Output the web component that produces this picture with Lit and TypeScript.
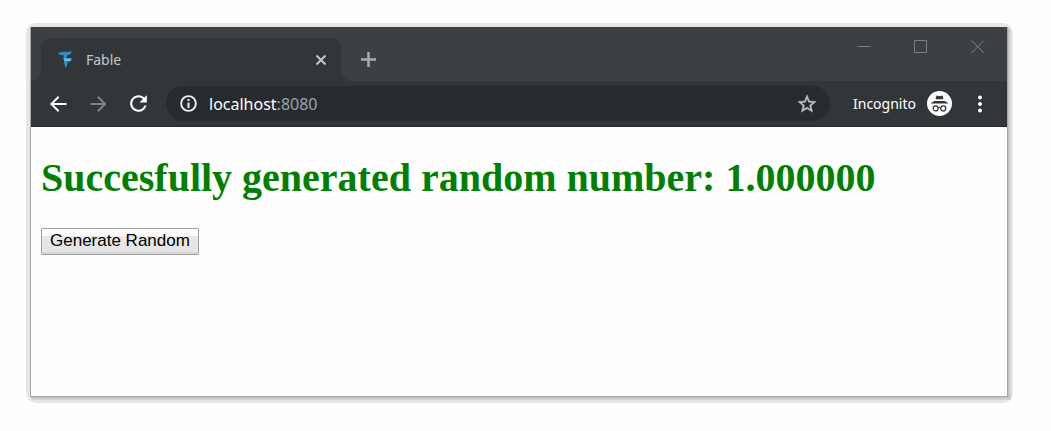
import { LitElement, html, css } from "lit";
import { customElement, property, state } from "lit/decorators.js";

@customElement("browser-tabs")
class BrowserTabs extends LitElement {
  @property() title = "";

  static styles = css`
    :host {
      display: flex;
      justify-content: space-between;
      height: 54px;
      background: #3c4043;
      font-family: "Noto Sans", sans-serif;
    }
    button {
      border: 0;
      padding: 0;
      background: none;
      color: inherit;
      display: flex;
      align-items: center;
      justify-content: center;
    }
    svg {
      display: block;
    }
    .strip {
      display: flex;
      align-items: flex-end;
      min-width: 0;
    }
    .flare {
      width: 10px;
      height: 10px;
      flex: none;
    }
    .flare.start {
      background: radial-gradient(circle at 0 0, #3c4043 9px, #323639 10px);
    }
    .flare.end {
      background: radial-gradient(circle at 100% 0, #3c4043 9px, #323639 10px);
    }
    .tab {
      display: flex;
      align-items: center;
      box-sizing: border-box;
      width: 300px;
      height: 43px;
      padding: 0 12px 0 14px;
      border-radius: 10px 10px 0 0;
      background: #323639;
      color: #c3c6c9;
    }
    .title {
      flex: 1;
      padding-left: 11px;
      font-size: 14px;
      line-height: 20px;
    }
    .add {
      width: 35px;
      height: 43px;
      color: #a9acae;
    }
    .controls {
      display: flex;
      height: 40px;
      padding-right: 1px;
      color: #7d8082;
    }
    .controls button {
      width: 57px;
    }
  `;

  render() {
    return html`
      <div class="strip">
        <span class="flare start"></span>
        <div class="tab">
          <svg width="20" height="20" viewBox="0 0 20 20" aria-hidden="true">
            <path fill="#2f8fc4" d="M3 3.500 C6 1 11 2 17 1.500 C16.500 4 14 5 12 5.300 L11.500 8 L16.500 8.500 L16 11 L12.500 12 C13 14 11.500 16 10.500 18.500 C10 15 8.500 13 9 10 C7.500 9 9 7 9 5.500 C7 5 5 5 3 3.500 Z" />
            <path fill="#67bde5" d="M9 8.500 L16.500 8.500 L15.500 11 L9.500 11 Z" />
          </svg>
          <span class="title">${this.title}</span>
          <button aria-label="Close tab">
            <svg width="16" height="16" viewBox="0 0 16 16" fill="none" stroke="currentColor" stroke-width="2">
              <path d="M3.500 3.500 L12.500 12.500 M12.500 3.500 L3.500 12.500" />
            </svg>
          </button>
        </div>
        <span class="flare end"></span>
        <button class="add" aria-label="New tab">
          <svg width="15" height="15" viewBox="0 0 15 15" fill="none" stroke="currentColor" stroke-width="2.500">
            <path d="M7.500 0 V15 M0 7.500 H15" />
          </svg>
        </button>
      </div>
      <div class="controls">
        <button aria-label="Minimize">
          <svg width="14" height="14" viewBox="0 0 14 14" fill="none" stroke="currentColor"><path d="M0.500 6.500 H13.500" /></svg>
        </button>
        <button aria-label="Maximize">
          <svg width="14" height="14" viewBox="0 0 14 14" fill="none" stroke="currentColor"><path d="M0.500 0.500 H12.500 V12.500 H0.500 Z" /></svg>
        </button>
        <button aria-label="Close">
          <svg width="14" height="14" viewBox="0 0 14 14" fill="none" stroke="currentColor"><path d="M0.500 0.500 L13 13 M13 0.500 L0.500 13" /></svg>
        </button>
      </div>
    `;
  }
}

@customElement("browser-toolbar")
class BrowserToolbar extends LitElement {
  @property() host = "";
  @property() port = "";

  static styles = css`
    :host {
      display: flex;
      align-items: center;
      box-sizing: border-box;
      height: 46px;
      padding: 0 15px;
      background: #323639;
      border-bottom: 1px solid #26292b;
      color: #ffffff;
      font-family: "Noto Sans", sans-serif;
    }
    button {
      border: 0;
      padding: 0;
      background: none;
      color: inherit;
      display: flex;
      align-items: center;
      justify-content: center;
    }
    svg {
      display: block;
    }
    .nav {
      display: flex;
      gap: 16px;
      padding-right: 15px;
    }
    .nav button:disabled {
      color: #808386;
    }
    .address {
      flex: 1;
      display: flex;
      align-items: center;
      box-sizing: border-box;
      height: 35px;
      padding: 0 12px;
      border-radius: 18px;
      background: #282b2e;
      color: #e8eaed;
    }
    .url {
      flex: 1;
      padding-left: 10px;
      font-size: 16px;
      line-height: 24px;
      color: #ffffff;
    }
    .port {
      color: #9aa0a6;
    }
    .star {
      color: #c0c3c6;
    }
    .mode {
      padding: 0 11px 0 23px;
      font-size: 14px;
      line-height: 20px;
    }
    .menu {
      padding-left: 16px;
    }
  `;

  render() {
    return html`
      <div class="nav">
        <button aria-label="Back">
          <svg width="24" height="24" viewBox="0 0 24 24" fill="currentColor"><path d="M20.500 11H7.800l5.600-5.600L12 4l-8 8 8 8 1.400-1.400L7.800 13h12.700z" /></svg>
        </button>
        <button aria-label="Forward" disabled>
          <svg width="24" height="24" viewBox="0 0 24 24" fill="currentColor"><path d="M4.500 11h12.200l-5.600-5.600L12.500 4l8 8-8 8-1.400-1.400 5.600-5.600H4.500z" /></svg>
        </button>
        <button aria-label="Reload">
          <svg width="25" height="25" viewBox="0 0 24 24" fill="currentColor"><path d="M17.650 6.350A8 8 0 1 0 19.730 14h-2.080A6 6 0 1 1 12 6c1.660 0 3.140.690 4.220 1.780L13 11h7V4z" /></svg>
        </button>
      </div>
      <div class="address">
        <svg width="21" height="21" viewBox="0 0 24 24" fill="currentColor" aria-hidden="true">
          <path d="M10.800 17.200h2.400v-6.400h-2.400zM10.800 9.200h2.400V6.800h-2.400zM12 2.500a9.500 9.500 0 1 0 0 19 9.500 9.500 0 0 0 0-19zm0 16.800a7.300 7.300 0 1 1 0-14.600 7.300 7.300 0 0 1 0 14.600z" />
        </svg>
        <span class="url">${this.host}<span class="port">:${this.port}</span></span>
        <button class="star" aria-label="Bookmark this page">
          <svg width="22" height="22" viewBox="0 0 24 24" fill="currentColor" stroke="currentColor" stroke-width="0.400"><path d="M22 9.240l-7.190-.620L12 2 9.190 8.630 2 9.240l5.460 4.730L5.820 21 12 17.270 18.180 21l-1.630-7.030zM12 15.400l-3.760 2.270 1-4.280-3.320-2.880 4.380-.380L12 6.100l1.710 4.040 4.380.380-3.320 2.880 1 4.280z" /></svg>
        </button>
      </div>
      <span class="mode">Incognito</span>
      <svg width="25" height="25" viewBox="0 0 25 25" aria-hidden="true">
        <circle cx="12.500" cy="12.500" r="12.500" fill="#ffffff" />
        <path fill="#303437" d="M9.500 4.500 L12.500 5.300 L15.500 4.500 L16.500 8.300 H8.500 Z M7.500 10 H17.500 L21 12 V12.500 H4 V12 Z" />
        <g fill="none" stroke="#303437" stroke-width="1.200">
          <circle cx="8.700" cy="17.400" r="2.500" />
          <circle cx="16.300" cy="17.400" r="2.500" />
          <path d="M11.200 17 Q12.500 16 13.800 17" />
        </g>
      </svg>
      <button class="menu" aria-label="Menu">
        <svg width="24" height="24" viewBox="0 0 24 24" fill="currentColor"><circle cx="12" cy="5.500" r="2" /><circle cx="12" cy="12" r="2" /><circle cx="12" cy="18.500" r="2" /></svg>
      </button>
    `;
  }
}

@customElement("app-root")
class AppRoot extends LitElement {
  @state() private value = 1;

  static styles = css`
    :host {
      display: flex;
      flex-direction: column;
      box-sizing: border-box;
      min-height: 100vh;
      padding: 23px 38px 28px 26px;
      background: #fefefe;
    }
    .frame {
      flex: 1;
      display: flex;
      flex-direction: column;
      padding: 4px 5px 6px 4px;
      border-radius: 10px;
      background: #e6e6e6;
    }
    .window {
      flex: 1;
      border: 1px solid #a6a6a6;
      border-top: 0;
      background: #fefefe;
      box-shadow: 1px 1px 0 #c2c2c2, 2px 2px 0 #cacaca, 3px 3px 0 #d6d6d6;
    }
    .page {
      padding: 27px 10px;
    }
    h1 {
      margin: 0 0 26px;
      color: #008000;
      font: bold 40px/48px "Liberation Serif", serif;
    }
    .generate {
      display: block;
      height: 27px;
      padding: 0 8px 2px;
      border: 1px solid #a0a0a0;
      border-radius: 1px;
      background: linear-gradient(#fcfcfc 7px, #e8e8e8 7px, #e4e4e4 23px, #d6d6d6 23px);
      color: #000000;
      font: 17px/22px "Liberation Sans", sans-serif;
    }
  `;

  private generate() {
    this.value = Math.random();
  }

  render() {
    return html`
      <div class="frame">
        <div class="window">
          <browser-tabs title="Fable"></browser-tabs>
          <browser-toolbar host="localhost" port="8080"></browser-toolbar>
          <main class="page">
            <h1>Succesfully generated random number: ${this.value.toFixed(6)}</h1>
            <button class="generate" @click=${this.generate}>Generate Random</button>
          </main>
        </div>
      </div>
    `;
  }
}
